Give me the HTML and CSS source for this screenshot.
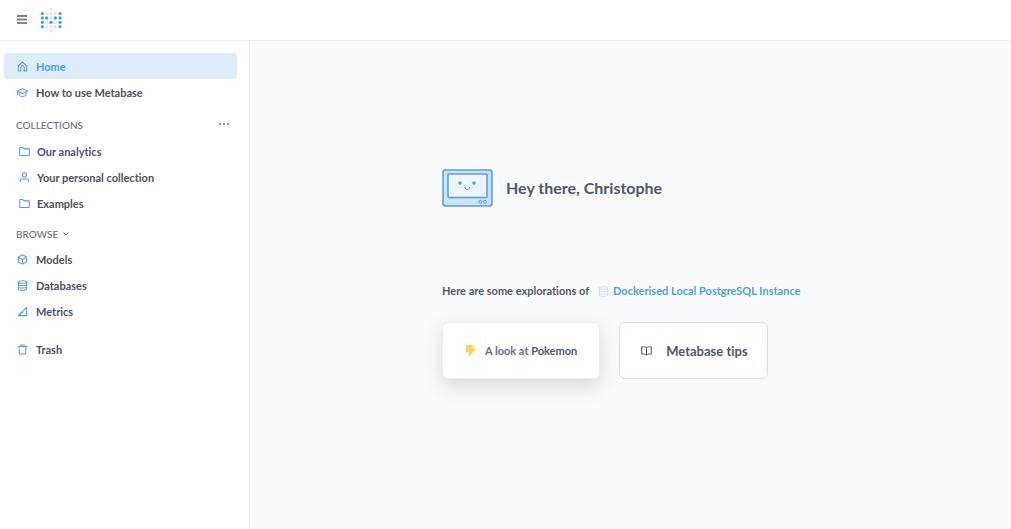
FILE: index.html
```html
<!DOCTYPE html>
<html lang="en">
<head>
<meta charset="utf-8">
<meta name="viewport" content="width=device-width, initial-scale=1">
<title>Metabase</title>
<link rel="stylesheet" href="styles.css">
</head>
<body>
<svg class="sprite" aria-hidden="true">
  <symbol id="folder" viewBox="0 0 16 16"><path d="M1 3c0-.5.3-.8.8-.8h3.800l1.800 2h6.800c.5 0 .8.3.8.8v8c0 .5-.3.8-.8.8H1.800c-.5 0-.8-.3-.8-.8z"/></symbol>
  <symbol id="database" viewBox="0 0 16 16"><path d="M2 3c0-2.400 12-2.400 12 0s-12 2.400-12 0v10c0 2.400 12 2.400 12 0V3M2 6.500c0 2.200 12 2.200 12 0M2 10c0 2.200 12 2.200 12 0"/></symbol>
</svg>
<header class="topbar">
  <button class="icon-button" type="button" aria-label="Toggle sidebar">
    <svg class="menu-icon" viewBox="0 0 10 9"><path d="M0 1h10M0 4.500h10M0 8h10"/></svg>
  </button>
  <a class="logo" href="#" aria-label="Metabase">
    <svg viewBox="0 0 66 78">
      <g class="dot-light"><circle cx="33" cy="7" r="5"/><circle cx="20" cy="20" r="5"/><circle cx="33" cy="20" r="5"/><circle cx="46" cy="20" r="5"/><circle cx="33" cy="33" r="5"/><circle cx="20" cy="46" r="5"/><circle cx="46" cy="46" r="5"/><circle cx="20" cy="59" r="5"/><circle cx="33" cy="59" r="5"/><circle cx="46" cy="59" r="5"/><circle cx="33" cy="72" r="5"/></g>
      <g class="dot-dark"><circle cx="7" cy="20" r="5"/><circle cx="60" cy="20" r="5"/><circle cx="7" cy="33" r="5"/><circle cx="20" cy="33" r="5"/><circle cx="46" cy="33" r="5"/><circle cx="60" cy="33" r="5"/><circle cx="7" cy="46" r="5"/><circle cx="33" cy="46" r="5"/><circle cx="60" cy="46" r="5"/><circle cx="7" cy="59" r="5"/><circle cx="60" cy="59" r="5"/></g>
    </svg>
  </a>
</header>
<div class="shell">
  <nav class="sidebar" aria-label="Main">
    <a class="item active" href="#" aria-current="page"><svg class="icon" viewBox="0 0 16 16"><path d="M2 14.500V7l6-5.500L14 7v7.500h-3.500V9.500C10.500 8 9.500 7 8 7S5.500 8 5.500 9.500v5z"/></svg>Home</a>
    <a class="item" href="#"><svg class="icon wide" viewBox="0 0 18 16"><path d="M1 6l8-3.500L17 6l-8 3.500zM4 7.500v4.500c2.500 2.400 7.500 2.400 10 0V7.500M1.500 6.500V12"/></svg>How to use Metabase</a>
    <div class="heading collections"><h2>Collections</h2>
      <button class="icon-button" type="button" aria-label="Collection options"><svg class="more" viewBox="0 0 10 4"><circle cx="1" cy="1" r="1"/><circle cx="5" cy="1" r="1"/><circle cx="9" cy="1" r="1"/></svg></button>
    </div>
    <a class="item nested" href="#"><svg class="icon folder"><use href="#folder"/></svg>Our analytics</a>
    <a class="item nested" href="#"><svg class="icon" viewBox="0 0 16 16"><circle cx="8" cy="4.200" r="3"/><path d="M1.800 15v-2c0-1.800 1.200-2.800 2.800-2.800h6.800c1.600 0 2.800 1 2.800 2.800v2"/></svg>Your personal collection</a>
    <a class="item nested" href="#"><svg class="icon folder"><use href="#folder"/></svg>Examples</a>
    <button class="heading browse" type="button" aria-expanded="true">Browse<svg class="chevron" viewBox="0 0 6 4"><path d="M.5.500L3 3 5.500.500"/></svg></button>
    <a class="item" href="#"><svg class="icon" viewBox="0 0 16 16"><path d="M8 1.200l6 3.200v7L8 14.800l-6-3.400v-7zM2 4.600L8 8l6-3.400M8 8v6.500"/></svg>Models</a>
    <a class="item" href="#"><svg class="icon"><use href="#database"/></svg>Databases</a>
    <a class="item" href="#"><svg class="icon" viewBox="0 0 16 16"><path d="M14 2v12H1.800zM8 8.500V10M5 11.500V14"/></svg>Metrics</a>
    <a class="item trash" href="#"><svg class="icon" viewBox="0 0 16 16"><path d="M1 3.500h14M5.500 3.500V1.500h5v2M3 3.500l.5 11h9l.5-11"/></svg>Trash</a>
  </nav>
  <main class="main">
    <div class="content">
      <div class="greeting">
        <svg class="robot" viewBox="0 0 51 38" aria-hidden="true">
          <rect class="robot-body" x="1" y="1" width="49" height="36" rx="2.500"/>
          <rect class="robot-screen" x="6" y="5" width="39" height="23.500" rx="1"/>
          <circle class="robot-eye" cx="18" cy="14" r="1.800"/><circle class="robot-eye" cx="32" cy="14" r="1.800"/>
          <path class="robot-line" d="M22.800 18c.2 3.400 4.600 3.400 4.800 0"/>
          <circle class="robot-line" cx="38.300" cy="32.800" r="1.500"/><circle class="robot-line" cx="43" cy="32.800" r="1.500"/>
        </svg>
        <h1>Hey there, Christophe</h1>
      </div>
      <p class="intro">Here are some explorations of <a href="#"><svg class="icon pale"><use href="#database"/></svg>Dockerised Local PostgreSQL Instance</a></p>
      <div class="cards">
        <a class="card raised" href="#"><svg class="bolt" viewBox="0 0 12 14"><path d="M2 1h7.500l-.7 3.500H12L4.500 13.500 5 8.500H1.500z"/></svg><span>A look at <strong>Pokemon</strong></span></a>
        <a class="card outlined" href="#"><svg class="book" viewBox="0 0 11 10"><path d="M5.500 1.500C4.500.800 3 .800.700.800v7.200c2.300 0 3.800 0 4.800 1 1-1 2.500-1 4.800-1V.800C8 .800 6.500.800 5.500 1.500zV9"/></svg><span>Metabase tips</span></a>
      </div>
    </div>
  </main>
</div>
</body>
</html>
```
FILE: styles.css
```css
* { box-sizing: border-box; }
body {
  margin: 0;
  min-height: 100vh;
  display: flex;
  flex-direction: column;
  font-family: Lato, sans-serif;
  font-size: 11px;
  font-weight: 700;
  font-variant-ligatures: none;
  line-height: 16px;
  color: #4c5773;
  background: #fff;
}
a { color: inherit; text-decoration: none; }
h1, h2, p { margin: 0; }
svg { display: block; flex: none; }
button { font: inherit; color: inherit; background: none; border: 0; padding: 0; cursor: pointer; }
.sprite { position: absolute; width: 0; height: 0; }

.topbar {
  height: 41px;
  display: flex;
  align-items: center;
  gap: 13px;
  padding: 0 17px 1px;
  border-bottom: 1px solid #eaebed;
}
.menu-icon { width: 10px; height: 9px; stroke: #7c8296; stroke-width: 2; }
.logo svg { width: 22px; height: 26px; }
.dot-light { fill: #dcebf8; }
.dot-dark { fill: #509ee3; }

.shell { flex: 1; display: flex; }
.sidebar {
  width: 250px;
  flex: none;
  padding: 12px 12px 12px 4px;
  border-right: 1px solid #eaebed;
  display: flex;
  flex-direction: column;
}
.item {
  height: 26px;
  display: flex;
  align-items: center;
  gap: 8px;
  padding: 2px 13px 0;
  border-radius: 4px;
  color: #4c5260;
}
.nested { gap: 7px; padding-left: 15px; }
.item .icon { margin-bottom: 2px; }
.active { background: #dcecf9; color: #509ee3; }
.icon { width: 11px; height: 11px; fill: none; stroke: #509ee3; stroke-width: 1.5; stroke-linejoin: round; }
.wide { width: 13px; margin: 0 -1px; }
.heading { color: #696e7b; font-size: 10px; font-weight: 500; line-height: 16px; text-transform: uppercase; padding: 0 8px 0 12px; }
.heading h2 { font: inherit; }
.collections { display: flex; align-items: center; justify-content: space-between; margin: 12px 0 5px; }
.more { width: 10px; height: 4px; fill: #696e7b; }
.browse { display: flex; align-items: center; gap: 5px; margin: 10px 0 4px; }
.chevron { width: 6px; height: 4px; fill: none; stroke: #696e7b; }
.trash { margin-top: 12px; }

.main { flex: 1; display: flex; justify-content: center; padding: 128px 16px 32px; background: #f9fbfc; }
.content { width: 100%; max-width: 377px; }
.greeting { display: flex; align-items: center; gap: 13px; }
.robot { width: 51px; height: 38px; }
.robot-body { fill: #cbe2f7; stroke: #509ee3; stroke-width: 1.5; }
.robot-screen { fill: #eef6fd; stroke: #509ee3; stroke-width: 1.5; }
.robot-eye { fill: #509ee3; }
.robot-line { fill: none; stroke: #509ee3; }
h1 { font-size: 16px; line-height: 20px; }
.intro { display: flex; align-items: center; gap: 9px; margin-top: 76px; }
.intro a { display: flex; align-items: center; gap: 4px; color: #509ee3; }
.pale { stroke: #cbe2f7; }
.cards { display: flex; gap: 19px; margin-top: 23px; }
.card { height: 57px; display: flex; align-items: center; padding: 0 21px; border: 1px solid #eeecec; border-radius: 6px; background: #fff; }
.raised { gap: 9px; padding-right: 22px; color: #696e7b; box-shadow: 0 7px 20px rgba(0, 0, 0, 0.15); }
.raised strong { font-weight: inherit; color: #4c5773; }
.outlined { gap: 14px; padding-right: 19px; font-size: 13px; border-color: #cbe2f7; }
.bolt { width: 12px; height: 14px; fill: #f9d45c; }
.book { width: 11px; height: 10px; fill: none; stroke: #4c5773; }
```
